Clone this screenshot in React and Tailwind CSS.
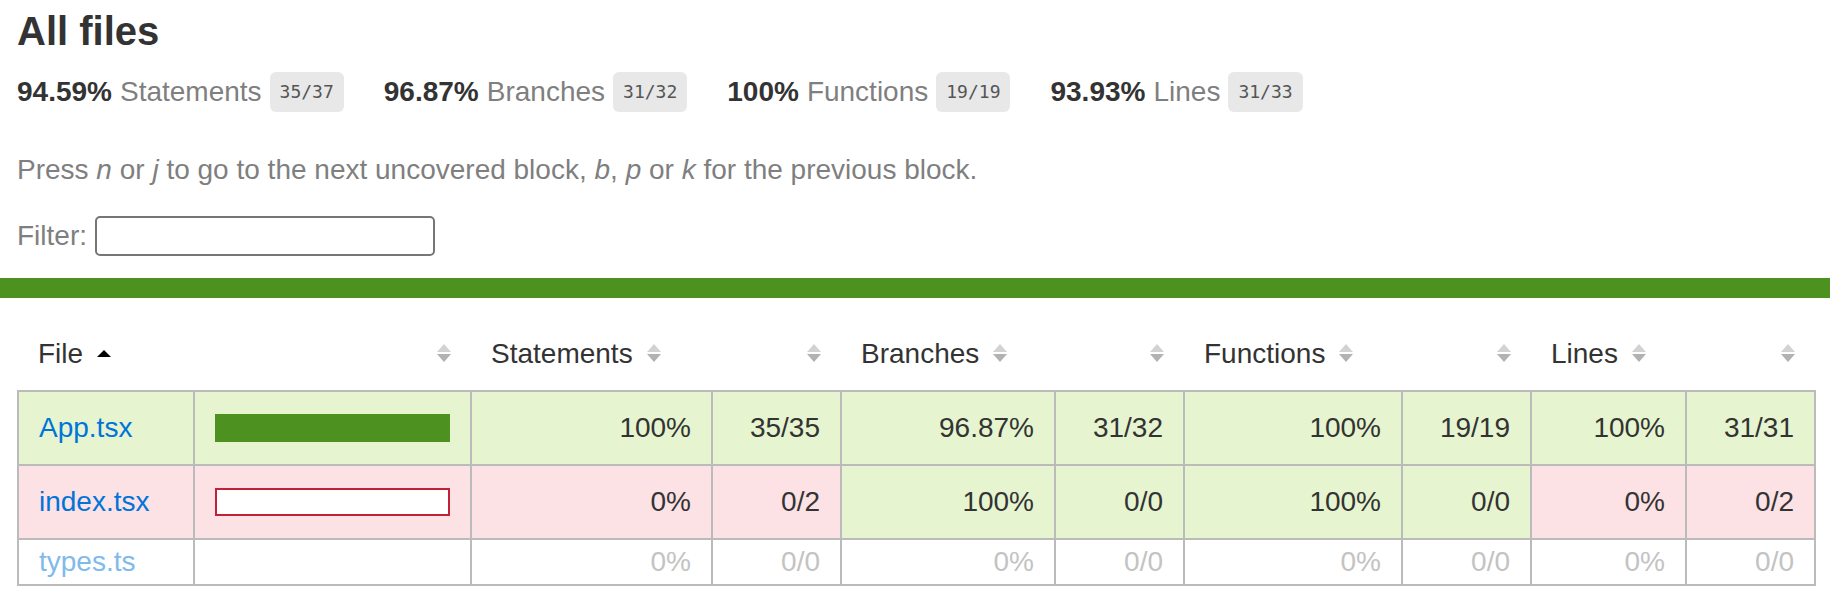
import React from 'react';

const stats = [
  { pct: '94.59%', label: 'Statements', frac: '35/37' },
  { pct: '96.87%', label: 'Branches', frac: '31/32' },
  { pct: '100%', label: 'Functions', frac: '19/19' },
  { pct: '93.93%', label: 'Lines', frac: '31/33' },
];

const HIGH = 'bg-[#e6f5d0]';
const LOW = 'bg-[#fce1e5]';

const rows = [
  {
    file: 'App.tsx',
    level: 'high',
    cells: [
      ['100%', '35/35', HIGH],
      ['96.87%', '31/32', HIGH],
      ['100%', '19/19', HIGH],
      ['100%', '31/31', HIGH],
    ],
  },
  {
    file: 'index.tsx',
    level: 'low',
    cells: [
      ['0%', '0/2', LOW],
      ['100%', '0/0', HIGH],
      ['100%', '0/0', HIGH],
      ['0%', '0/2', LOW],
    ],
  },
];

const empty = { file: 'types.ts', cells: ['0%', '0/0', '0%', '0/0', '0%', '0/0', '0%', '0/0'] };

// little sort arrows, same look as the istanbul sprite
const Sorter = ({ active }) => (
  <svg width="14" height="20" viewBox="0 0 14 20" className="inline-block ml-[14px] align-baseline">
    {active ? (
      <path d="M0 14 L7 7 L14 14 Z" fill="#000" />
    ) : (
      <>
        <path d="M0 9 L7 1 L14 9 Z" fill="#d2d2d2" />
        <path d="M0 11 L14 11 L7 19 Z" fill="#b2b2b2" />
      </>
    )}
  </svg>
);

const Chart = ({ level }) =>
  level === 'high' ? (
    <div className="h-[28px] border-2 border-[#4d9221] bg-[#4d9221]" />
  ) : (
    <div className="h-[28px] border-2 border-[#c21f39] bg-white" />
  );

export default function App() {
  const cell = 'px-[20px] py-[20px] leading-[32px] border-r-2 border-[#bbb]';
  return (
    <div className="min-h-screen bg-white text-[#333] font-['Liberation_Sans',Arial,sans-serif]">
      <div className="pl-[17px] pr-[16px]">
        <h1 className="pt-[8px] text-[40px] font-bold leading-[46px]">All files</h1>

        <div className="mt-[18px] flex">
          {stats.map((s) => (
            <div key={s.label} className="flex items-center h-[40px] pr-[40px] text-[28px] leading-[32px]">
              <span className="font-bold">{s.pct}</span>
              <span className="ml-[8px] text-[#7f7f7f]">{s.label}</span>
              <span className="ml-[8px] inline-flex items-center h-[40px] px-[10px] rounded-[6px] bg-[#e8e8e8] text-[#555] text-[18px] font-['DejaVu_Sans_Mono',monospace]">
                {s.frac}
              </span>
            </div>
          ))}
        </div>

        <p className="mt-[42px] text-[28px] leading-[32px] text-[#7f7f7f]">
          Press <em>n</em> or <em>j</em> to go to the next uncovered block, <em>b</em>, <em>p</em> or <em>k</em> for the previous block.
        </p>

        <div className="mt-[30px] flex items-center text-[28px] leading-[32px] text-[#7f7f7f]">
          <span>Filter:</span>
          <input type="search" className="ml-[8px] w-[340px] h-[40px] border-2 border-[#767676] rounded-[5px] bg-white" />
        </div>
      </div>

      <div className="mt-[22px] h-[20px] bg-[#4d9221]" />

      <div className="pt-[20px] pl-[17px] pr-[16px]">
        <table className="w-full table-fixed border-collapse text-[28px]">
          <colgroup>
            <col className="w-[176px]" />
            <col className="w-[277px]" />
            <col className="w-[241px]" />
            <col className="w-[129px]" />
            <col className="w-[214px]" />
            <col className="w-[129px]" />
            <col className="w-[218px]" />
            <col className="w-[129px]" />
            <col className="w-[155px]" />
            <col className="w-[129px]" />
          </colgroup>
          <thead>
            <tr className="border-b-2 border-[#bbb]">
              <th className="px-[20px] py-[20px] leading-[32px] text-left font-normal whitespace-nowrap">
                File<Sorter active />
              </th>
              <th className="px-[20px] py-[20px] leading-[32px] text-right font-normal whitespace-nowrap">
                <Sorter />
              </th>
              {['Statements', 'Branches', 'Functions', 'Lines'].map((h) => (
                <React.Fragment key={h}>
                  <th className="px-[20px] py-[20px] leading-[32px] text-left font-normal whitespace-nowrap">
                    {h}
                    <Sorter />
                  </th>
                  <th className="px-[20px] py-[20px] leading-[32px] text-right font-normal whitespace-nowrap">
                    <Sorter />
                  </th>
                </React.Fragment>
              ))}
            </tr>
          </thead>
          <tbody className="border-2 border-[#bbb]">
            {rows.map((r) => {
              const bg = r.level === 'high' ? HIGH : LOW;
              return (
                <tr key={r.file} className="border-b-2 border-[#bbb]">
                  <td className={`${cell} ${bg} whitespace-nowrap`}>
                    <a href="#" className="text-[#0074d9]">{r.file}</a>
                  </td>
                  <td className={`${cell} ${bg}`}>
                    <Chart level={r.level} />
                  </td>
                  {r.cells.map(([pct, abs, c], i) => (
                    <React.Fragment key={i}>
                      <td className={`${cell} ${c} text-right`}>{pct}</td>
                      <td className={`${i === 3 ? 'px-[20px] py-[20px] leading-[32px]' : cell} ${c} text-right`}>{abs}</td>
                    </React.Fragment>
                  ))}
                </tr>
              );
            })}
            <tr className="border-b-2 border-[#bbb]">
              <td className="px-[20px] py-[8px] leading-[28px] border-r-2 border-[#bbb] whitespace-nowrap">
                <a href="#" className="text-[#80baec]">{empty.file}</a>
              </td>
              <td className="px-[20px] py-[8px] leading-[28px] border-r-2 border-[#bbb]" />
              {empty.cells.map((v, i) => (
                <td
                  key={i}
                  className={`px-[20px] py-[8px] leading-[28px] text-right text-[#c3c3c3] ${i === 7 ? '' : 'border-r-2 border-[#bbb]'}`}
                >
                  {v}
                </td>
              ))}
            </tr>
          </tbody>
        </table>
      </div>
    </div>
  );
}
